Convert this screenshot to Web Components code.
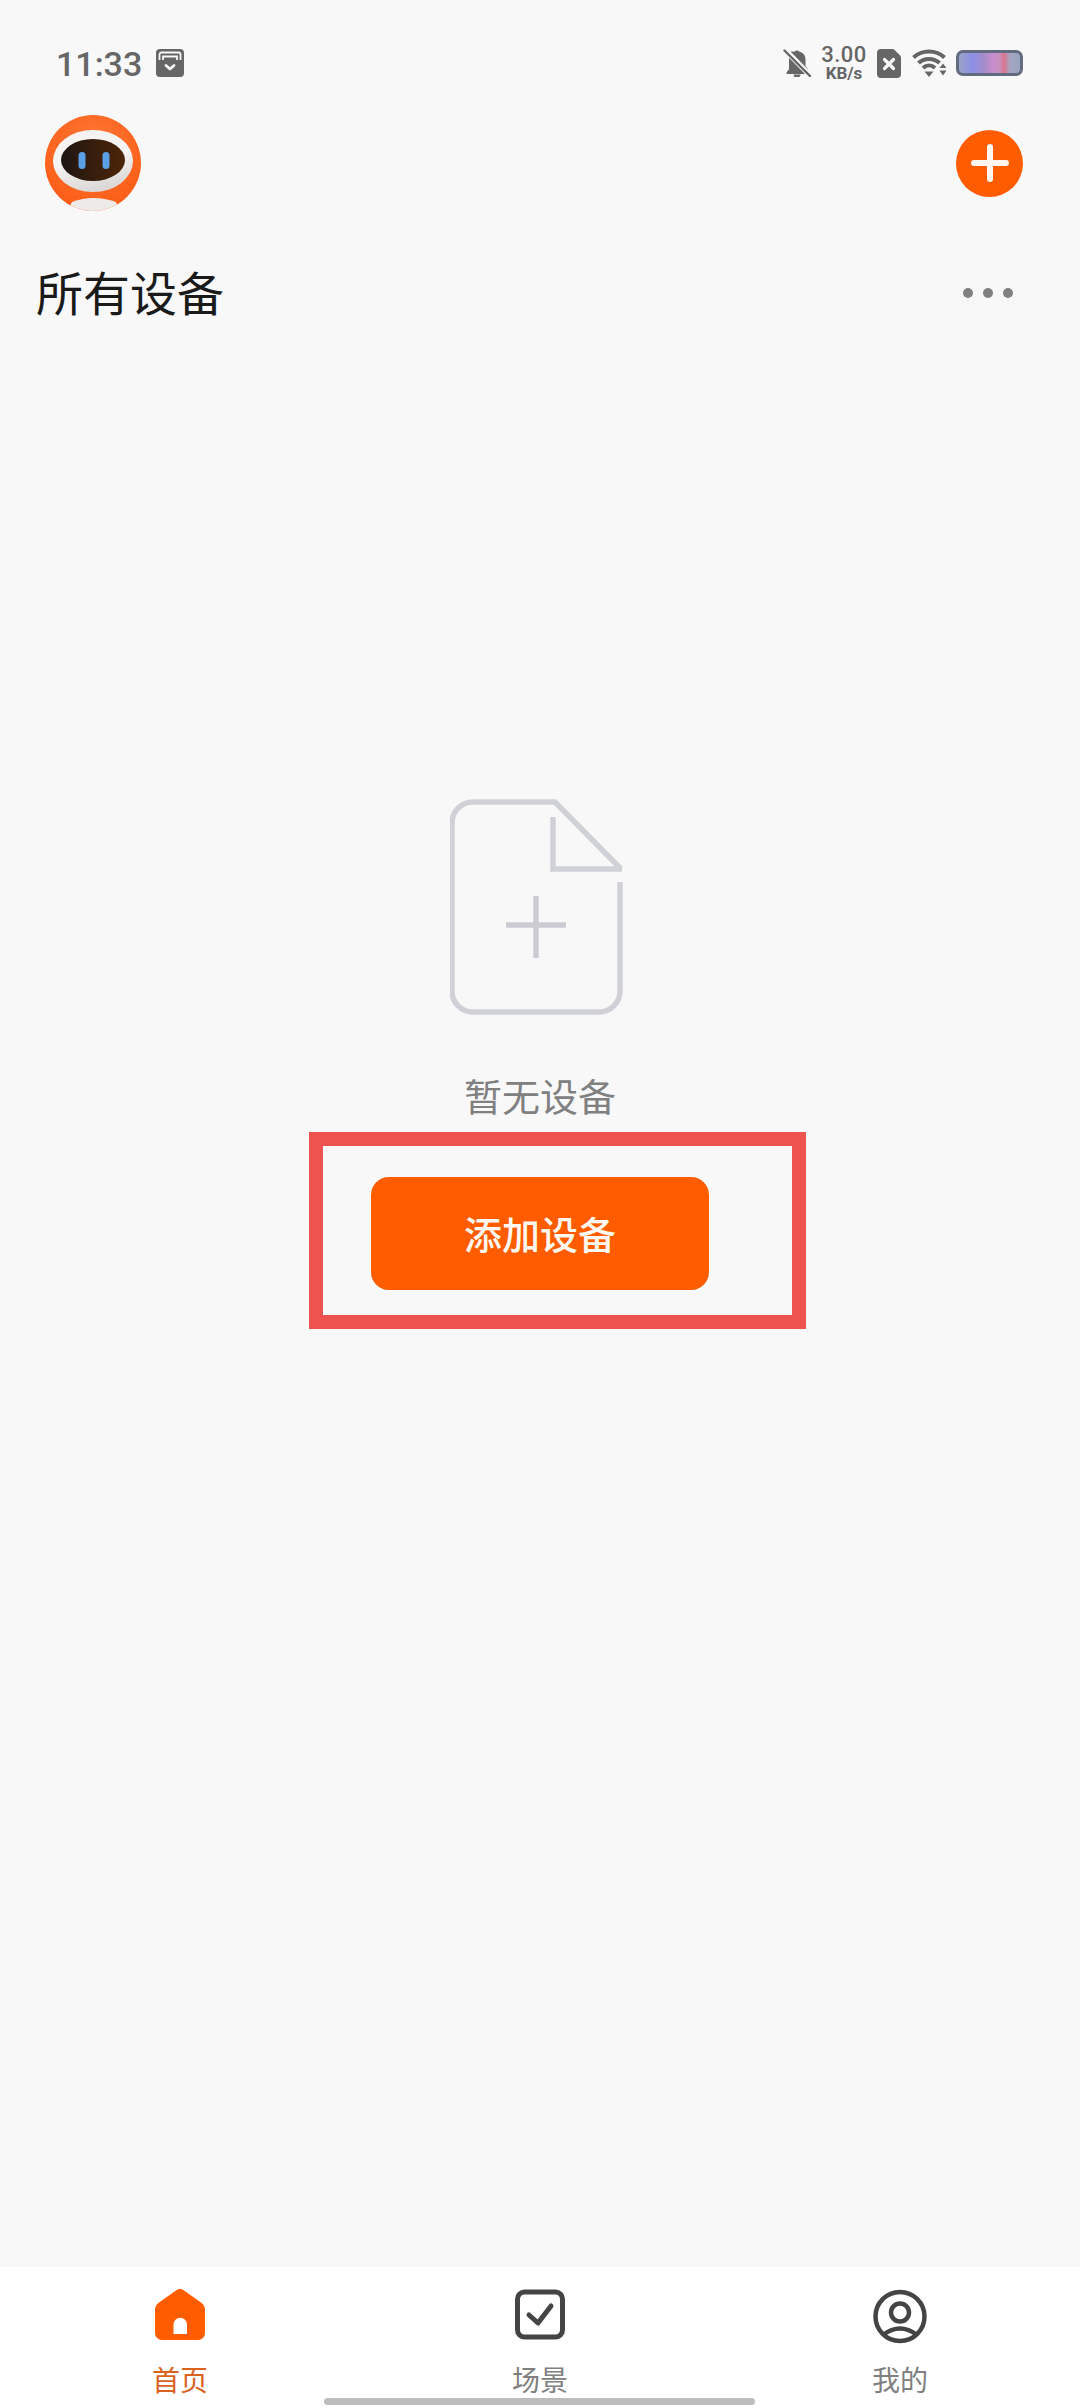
<!DOCTYPE html>
<html lang="zh">
<head>
<meta charset="utf-8">
<title>所有设备</title>
<style>
  html, body { margin: 0; padding: 0; }
  body {
    width: 1080px;
    height: 2408px;
    overflow: hidden;
    position: relative;
    display: flex;
    flex-direction: column;
    background: #f8f8f9;
    font-family: "Noto Sans CJK SC", "Noto Sans", sans-serif;
  }
</style>
</head>
<body>
  <status-bar></status-bar>
  <app-header></app-header>
  <section-title heading="所有设备"></section-title>
  <empty-state message="暂无设备" action="添加设备"></empty-state>
  <tab-bar>
    <tab-item label="首页" active>
      <svg width="50" height="51" viewBox="0 0 50 51"><path fill="#ff5c00" fill-rule="evenodd" d="M21 1.400a7 7 0 0 1 8 0L46 13.500a9 9 0 0 1 4 7.500V44a7 7 0 0 1-7 7H7a7 7 0 0 1-7-7V21a9 9 0 0 1 4-7.500ZM18.500 45H32V35.500a6.700 6.700 0 0 0-13.500 0Z"/></svg>
    </tab-item>
    <tab-item label="场景">
      <svg width="50" height="51" viewBox="0 0 50 51" fill="none" stroke="#444" stroke-width="5"><rect x="2.500" y="3" width="45" height="45" rx="7"/><path d="M14 26l9 8 13-17" stroke-linecap="round" stroke-linejoin="round"/></svg>
    </tab-item>
    <tab-item label="我的">
      <svg width="54" height="55" viewBox="0 0 54 55" fill="none" stroke="#444" stroke-width="4.500"><circle cx="27" cy="27.500" r="24.500"/><circle cx="27" cy="23.500" r="9"/><path d="M10 46Q27 33 44 46"/></svg>
    </tab-item>
  </tab-bar>
  <highlight-box></highlight-box>

<script>
// Barra de estado del sistema: hora a la izquierda, indicadores a la derecha.
class StatusBar extends HTMLElement {
  constructor() {
    super();
    this.attachShadow({ mode: 'open' });
  }

  connectedCallback() {
    this.shadowRoot.innerHTML = `
      <style>
        :host {
          display: flex;
          align-items: center;
          justify-content: space-between;
          height: 46px;
          margin-top: 40px;
          padding: 0 57px 0 56px;
          color: #666;
          font-family: Roboto, "Noto Sans", sans-serif;
        }
        .side { display: flex; align-items: center; }
        .time { font-size: 34px; font-weight: 500; line-height: 46px; margin: 2px 14px 0 0; }
        svg { display: block; }
        .speed {
          display: flex;
          flex-direction: column;
          align-items: center;
          width: 46px;
          margin: 0 10px;
        }
        .speed b { font-size: 22px; line-height: 20px; font-weight: 500; letter-spacing: .5px; }
        .speed span { font-size: 17px; line-height: 17px; font-weight: 700; }
        .battery {
          width: 67px;
          height: 26px;
          box-sizing: border-box;
          margin-left: 9px;
          border: 3px solid #636b80;
          border-radius: 7px;
          background: linear-gradient(90deg, #9aa3c4 0%, #8d90e8 22%, #a08ccc 38%, #c78dcc 55%, #c690c0 66%, #d9748e 74%, #a4a6c2 84%, #9aa3bd 100%);
        }
      </style>
      <div class="side">
        <span class="time">11:33</span>
        <svg width="28" height="28" viewBox="0 0 28 28">
          <rect width="28" height="28" rx="4" fill="#666"/>
          <path d="M3.500 11V5.500a2 2 0 0 1 2-2h17a2 2 0 0 1 2 2V11" fill="none" stroke="#f8f8f9" stroke-width="1.800"/>
          <path d="M7 11V7.500h14V11" fill="none" stroke="#f8f8f9" stroke-width="1.800"/>
          <path d="M10 16.500l4 3.500 4-3.500" fill="none" stroke="#f8f8f9" stroke-width="2.800" stroke-linecap="round" stroke-linejoin="round"/>
        </svg>
      </div>
      <div class="side">
        <svg width="28" height="28" viewBox="0 0 28 28" fill="#666">
          <path d="M14 1.500a3 3 0 0 1 2.500 1.300c3.800.9 6 3.800 6 7.700v6.300l3 4.200-18-18.500A9 9 0 0 1 11.500 2.800 3 3 0 0 1 14 1.500Z"/>
          <path d="M6 8.800 22 25H3.500v-1.500L6 20.200v-9.700c0-.6 0-1.200.1-1.700Z"/>
          <path d="M10.500 25.500h7a3.500 3 0 0 1-7 0Z"/>
          <path d="M1.500 1.500 27 27" stroke="#666" stroke-width="2.400" stroke-linecap="round"/>
        </svg>
        <div class="speed"><b>3.00</b><span>KB/s</span></div>
        <svg width="24" height="29" viewBox="0 0 24 29">
          <path fill="#666" d="M4 0h11.500a3 3 0 0 1 2.100.9l5.500 5.700a3 3 0 0 1 .9 2.100V25a4 4 0 0 1-4 4H4a4 4 0 0 1-4-4V4a4 4 0 0 1 4-4Z"/>
          <path d="M7.500 10.500l9 9M16.500 10.500l-9 9" stroke="#f8f8f9" stroke-width="3.200" stroke-linecap="round"/>
        </svg>
        <svg style="margin-left:11px" width="35" height="28" viewBox="0 0 35 28" fill="none" stroke="#666" stroke-width="4">
          <path d="M1.500 8.500C10 .5 24 .5 32.500 8.500"/>
          <path d="M6.500 14C12 8.500 22 8.500 27.500 14"/>
          <path d="M11 19c3.500-3.200 8.500-3.200 12 0"/>
          <path d="M12.500 22.500h9L17 28Z" fill="#666" stroke="none"/>
          <path d="M27.500 19h7L31 14.500ZM27.500 21.500h7L31 26.500Z" fill="#666" stroke="none"/>
        </svg>
        <div class="battery"></div>
      </div>
    `;
  }
}

// Cabecera con el avatar del robot y el boton circular de agregar.
class AppHeader extends HTMLElement {
  constructor() {
    super();
    this.attachShadow({ mode: 'open' });
  }

  connectedCallback() {
    this.shadowRoot.innerHTML = `
      <style>
        :host {
          display: flex;
          align-items: center;
          justify-content: space-between;
          height: 96px;
          margin-top: 29px;
          padding: 0 57px 0 45px;
        }
        svg { display: block; }
        .add {
          width: 67px;
          height: 67px;
          border-radius: 50%;
          background: #ff5c00;
          display: flex;
          align-items: center;
          justify-content: center;
        }
      </style>
      <svg width="96" height="96" viewBox="0 0 96 96">
        <defs>
          <radialGradient id="shell" cx=".5" cy=".35" r=".7">
            <stop offset="0" stop-color="#ff7a3a"/>
            <stop offset="1" stop-color="#fb5a12"/>
          </radialGradient>
          <linearGradient id="ring" x1="0" y1="0" x2=".3" y2="1">
            <stop offset=".55" stop-color="#f6f4f3"/>
            <stop offset="1" stop-color="#dcd9d8"/>
          </linearGradient>
          <linearGradient id="visor" x1="0" y1="0" x2="1" y2="0">
            <stop offset="0" stop-color="#1f1613"/>
            <stop offset="1" stop-color="#4d2507"/>
          </linearGradient>
          <clipPath id="round"><circle cx="48" cy="48" r="48"/></clipPath>
        </defs>
        <circle cx="48" cy="48" r="48" fill="url(#shell)"/>
        <ellipse cx="48" cy="46" rx="40" ry="31" fill="url(#ring)"/>
        <ellipse cx="48" cy="45" rx="32" ry="21" fill="url(#visor)"/>
        <rect x="33.500" y="37" width="7" height="17" rx="3.500" fill="#5aa0e6"/>
        <rect x="57.500" y="37" width="7" height="17" rx="3.500" fill="#5aa0e6"/>
        <path clip-path="url(#round)" d="M27 87Q48 79 71 87L76 100H20Z" fill="#eeeae8"/>
      </svg>
      <div class="add">
        <svg width="38" height="38" viewBox="0 0 38 38"><path d="M19 3v32M3 19h32" stroke="#fff6f0" stroke-width="6" stroke-linecap="round"/></svg>
      </div>
    `;
  }
}

// Fila de titulo de seccion con el menu de tres puntos.
class SectionTitle extends HTMLElement {
  constructor() {
    super();
    this.attachShadow({ mode: 'open' });
  }

  connectedCallback() {
    const heading = this.getAttribute('heading') || '';
    this.shadowRoot.innerHTML = `
      <style>
        :host {
          display: flex;
          align-items: center;
          justify-content: space-between;
          height: 60px;
          margin-top: 52px;
          padding: 0 67px 0 36px;
        }
        h1 {
          margin: 0 0 4px;
          color: #1a1a1a;
          font-size: 47px;
          font-weight: 400;
          line-height: 60px;
        }
        .dots { display: flex; gap: 10px; }
        .dots i { width: 10px; height: 10px; border-radius: 50%; background: #808080; }
      </style>
      <h1>${heading}</h1>
      <div class="dots"><i></i><i></i><i></i></div>
    `;
  }
}

// Estado vacio: icono de documento, mensaje y boton de accion.
class EmptyState extends HTMLElement {
  constructor() {
    super();
    this.attachShadow({ mode: 'open' });
  }

  connectedCallback() {
    this.shadowRoot.innerHTML = `
      <style>
        :host {
          flex: 1;
          display: flex;
          flex-direction: column;
          align-items: center;
          padding-top: 476px;
        }
        svg { display: block; margin-right: 7px; }
        p {
          margin: 55px 0 0;
          color: #808080;
          font-size: 38px;
          line-height: 50px;
        }
        button {
          width: 338px;
          height: 113px;
          margin-top: 57px;
          padding: 0 0 3px;
          border: 0;
          border-radius: 18px;
          background: #ff5c00;
          color: #fff8f0;
          font-family: inherit;
          font-size: 38px;
          font-weight: 500;
        }
      </style>
      <svg width="173" height="216" viewBox="0 0 173 216" fill="none" stroke="#d0d1d7" stroke-width="5.500">
        <path d="M170 83V192a21 21 0 0 1-21 21H23a21 21 0 0 1-21-21V24A21 21 0 0 1 23 3H105L171 70"/>
        <path d="M103 18V70H172"/>
        <path d="M56 126H116M86 97V159" stroke="#cbcbd3"/>
      </svg>
      <p>${this.getAttribute('message')}</p>
      <button type="button">${this.getAttribute('action')}</button>
    `;
  }
}

class TabBar extends HTMLElement {
  constructor() {
    super();
    this.attachShadow({ mode: 'open' });
  }

  connectedCallback() {
    this.shadowRoot.innerHTML = `
      <style>
        :host {
          display: grid;
          grid-template-columns: repeat(3, 360px);
          height: 141px;
          background: #fff;
          position: relative;
        }
        .handle {
          position: absolute;
          left: 324px;
          bottom: 3px;
          width: 431px;
          height: 7px;
          border-radius: 4px;
          background: #bdbdbd;
        }
      </style>
      <slot></slot>
      <div class="handle"></div>
    `;
  }
}

class TabItem extends HTMLElement {
  constructor() {
    super();
    this.attachShadow({ mode: 'open' });
  }

  connectedCallback() {
    this.shadowRoot.innerHTML = `
      <style>
        :host {
          display: flex;
          flex-direction: column;
          align-items: center;
          padding-top: 22px;
          color: #808080;
        }
        :host([active]) { color: #d9631f; }
        .icon { height: 55px; display: flex; align-items: flex-start; }
        span { margin-top: 17px; font-size: 28px; line-height: 36px; }
      </style>
      <div class="icon"><slot></slot></div>
      <span>${this.getAttribute('label')}</span>
    `;
  }
}

// Recuadro rojo de anotacion, superpuesto al boton de agregar.
class HighlightBox extends HTMLElement {
  constructor() {
    super();
    this.attachShadow({ mode: 'open' });
  }

  connectedCallback() {
    this.shadowRoot.innerHTML = `
      <style>
        :host {
          position: absolute;
          left: 309px;
          top: 1132px;
          width: 497px;
          height: 197px;
          box-sizing: border-box;
          border: 14px solid #ef5350;
          pointer-events: none;
        }
      </style>
    `;
  }
}

customElements.define('status-bar', StatusBar);
customElements.define('app-header', AppHeader);
customElements.define('section-title', SectionTitle);
customElements.define('empty-state', EmptyState);
customElements.define('tab-bar', TabBar);
customElements.define('tab-item', TabItem);
customElements.define('highlight-box', HighlightBox);
</script>
</body>
</html>
